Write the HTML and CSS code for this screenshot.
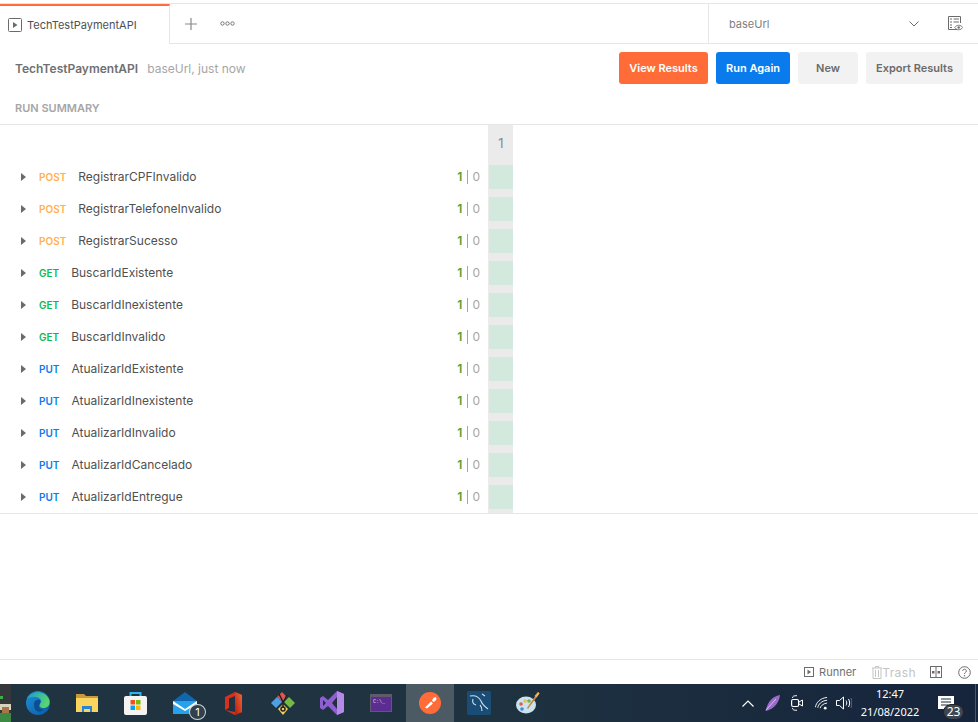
FILE: index.html
```html
<!DOCTYPE html>
<html lang="en">
<head>
<meta charset="utf-8">
<title>TechTestPaymentAPI</title>
<link rel="stylesheet" href="styles.css">
</head>
<body>
<div class="app">
  <div class="tabbar">
    <div class="tab">
      <svg class="tab-icon" width="14" height="14" viewBox="0 0 14 14"><rect x=".5" y=".5" width="13" height="13" rx="1" fill="none" stroke="#6b6b6b"/><path d="M5 4l4.500 3L5 10z" fill="#6b6b6b"/></svg>
      <span class="tab-title">TechTestPaymentAPI</span>
    </div>
    <div class="tab-actions">
      <svg width="12" height="12" viewBox="0 0 12 12"><path d="M6 0v12M0 6h12" stroke="#8a8a8a" stroke-width="1.200"/></svg>
      <svg class="dots" width="15" height="5" viewBox="0 0 15 5"><g fill="none" stroke="#777"><circle cx="2.500" cy="2.500" r="1.700"/><circle cx="7.500" cy="2.500" r="1.700"/><circle cx="12.500" cy="2.500" r="1.700"/></g></svg>
    </div>
    <div class="env">
      <span class="env-name">baseUrl</span>
      <svg width="10" height="6" viewBox="0 0 10 6"><path d="M.5.500L5 5l4.500-4.500" fill="none" stroke="#6b6b6b"/></svg>
    </div>
    <div class="env-eye">
      <svg width="15" height="15" viewBox="0 0 15 15"><path d="M9.500 13.500H.5V.5h12v6.500" fill="none" stroke="#6b6b6b"/><path d="M2 3h2M5.500 3h5.500M2 6h2M5.500 6h5.500M2 9h2M2 11.500h2" stroke="#6b6b6b"/><path d="M6.700 11.500c2-3 6-3 8 0-2 3-6 3-8 0z" fill="#fff" stroke="#6b6b6b" stroke-width=".9"/><circle cx="10.700" cy="11.500" r="1.200" fill="#6b6b6b"/></svg>
    </div>
  </div>

  <div class="run-head">
    <div class="run-title"><strong>TechTestPaymentAPI</strong><span>baseUrl, just now</span></div>
    <div class="run-buttons">
      <button class="btn btn-orange">View Results</button>
      <button class="btn btn-blue">Run Again</button>
      <button class="btn btn-new">New</button>
      <button class="btn btn-export">Export Results</button>
    </div>
  </div>

  <div class="summary-label">RUN SUMMARY</div>

  <div class="summary">
    <div class="grid-head"><span class="iter">1</span></div>
    <div class="row"><div class="info"><i class="caret"></i><b class="m post">POST</b><span class="name">RegistrarCPFInvalido</span><span class="score"><em>1</em><u></u><span>0</span></span></div><div class="cell"><div class="pass"></div></div></div>
    <div class="row"><div class="info"><i class="caret"></i><b class="m post">POST</b><span class="name">RegistrarTelefoneInvalido</span><span class="score"><em>1</em><u></u><span>0</span></span></div><div class="cell"><div class="pass"></div></div></div>
    <div class="row"><div class="info"><i class="caret"></i><b class="m post">POST</b><span class="name">RegistrarSucesso</span><span class="score"><em>1</em><u></u><span>0</span></span></div><div class="cell"><div class="pass"></div></div></div>
    <div class="row"><div class="info"><i class="caret"></i><b class="m get">GET</b><span class="name">BuscarIdExistente</span><span class="score"><em>1</em><u></u><span>0</span></span></div><div class="cell"><div class="pass"></div></div></div>
    <div class="row"><div class="info"><i class="caret"></i><b class="m get">GET</b><span class="name">BuscarIdInexistente</span><span class="score"><em>1</em><u></u><span>0</span></span></div><div class="cell"><div class="pass"></div></div></div>
    <div class="row"><div class="info"><i class="caret"></i><b class="m get">GET</b><span class="name">BuscarIdInvalido</span><span class="score"><em>1</em><u></u><span>0</span></span></div><div class="cell"><div class="pass"></div></div></div>
    <div class="row"><div class="info"><i class="caret"></i><b class="m put">PUT</b><span class="name">AtualizarIdExistente</span><span class="score"><em>1</em><u></u><span>0</span></span></div><div class="cell"><div class="pass"></div></div></div>
    <div class="row"><div class="info"><i class="caret"></i><b class="m put">PUT</b><span class="name">AtualizarIdInexistente</span><span class="score"><em>1</em><u></u><span>0</span></span></div><div class="cell"><div class="pass"></div></div></div>
    <div class="row"><div class="info"><i class="caret"></i><b class="m put">PUT</b><span class="name">AtualizarIdInvalido</span><span class="score"><em>1</em><u></u><span>0</span></span></div><div class="cell"><div class="pass"></div></div></div>
    <div class="row"><div class="info"><i class="caret"></i><b class="m put">PUT</b><span class="name">AtualizarIdCancelado</span><span class="score"><em>1</em><u></u><span>0</span></span></div><div class="cell"><div class="pass"></div></div></div>
    <div class="row row-last"><div class="info"><i class="caret"></i><b class="m put">PUT</b><span class="name">AtualizarIdEntregue</span><span class="score"><em>1</em><u></u><span>0</span></span></div><div class="cell"><div class="pass"></div></div></div>
  </div>

  <div class="spacer"></div>

  <div class="statusbar">
    <span class="st st-run"><svg width="10" height="10" viewBox="0 0 10 10"><rect x=".5" y=".5" width="9" height="9" fill="none" stroke="#6b6b6b"/><path d="M3.500 2.500l3.500 2.500-3.500 2.500z" fill="#6b6b6b"/></svg>Runner</span>
    <span class="st st-trash"><svg width="10" height="13" viewBox="0 0 10 13"><path d="M0 2h10M3.500 2V.5h3V2M1 2v10.500h8V2M3.500 4v7M6.500 4v7" fill="none" stroke="#c4c4c4"/></svg>Trash</span>
    <svg class="st-layout" width="12" height="12" viewBox="0 0 12 12"><rect x=".5" y=".5" width="11" height="11" fill="none" stroke="#6b6b6b"/><path d="M6 .5v11" stroke="#6b6b6b"/><rect x="2" y="5" width="2.500" height="2.500" fill="#6b6b6b"/><rect x="7.500" y="5" width="2.500" height="2.500" fill="#6b6b6b"/></svg>
    <svg class="st-help" width="13" height="13" viewBox="0 0 13 13"><circle cx="6.500" cy="6.500" r="5.800" fill="none" stroke="#6b6b6b"/><path d="M4.700 5c0-2.400 3.700-2.400 3.700 0 0 1.400-1.900 1.300-1.900 2.900" fill="none" stroke="#6b6b6b"/><circle cx="6.500" cy="9.700" r=".7" fill="#6b6b6b"/></svg>
  </div>

  <div class="taskbar">
    <svg class="thumb" width="11" height="38" viewBox="0 0 11 38"><rect width="11" height="38" fill="#34383a"/><rect x="0" y="12" width="3" height="3" fill="#3fae49"/><rect x="0" y="20" width="11" height="6" fill="#d8d2c0"/><rect x="2" y="23" width="7" height="6" fill="#a9744a"/><rect x="0" y="29" width="11" height="9" fill="#3d8a45"/></svg>
    <div class="apps">
      <div class="app-tile"><svg width="24" height="24" viewBox="0 0 24 24"><defs><linearGradient id="eg" x1="0" y1="0" x2="1" y2="1"><stop offset="0" stop-color="#1e90d8"/><stop offset="1" stop-color="#0c59a4"/></linearGradient><linearGradient id="eh" x1="0" y1="0" x2="1" y2="0.400"><stop offset="0" stop-color="#1a9ad6"/><stop offset="1" stop-color="#58d66e"/></linearGradient></defs><circle cx="12" cy="12" r="12" fill="url(#eg)"/><path d="M1 8C4 0 18-2 23 8c2 5-1 9-5 9-4 0-5-2-4-4 1-2 2-3 0-5-3-3-9-3-13 0z" fill="url(#eh)"/><path d="M8 13c0-3 3-5 6-4 1 2 0 3-1 5s1 5 5 4c-4 5-10 3-10-5z" fill="#0b4e92"/></svg></div>
      <div class="app-tile"><svg width="22" height="20" viewBox="0 0 22 20"><path d="M0 1h8l2 2h12v15H0z" fill="#c99a3c"/><path d="M0 5h22v14H0z" fill="#fbd35f"/><path d="M6 13h10v6h-2v-3H8v3H6z" fill="#2a84d0"/></svg></div>
      <div class="app-tile"><svg width="23" height="24" viewBox="0 0 23 24"><path d="M6.500 6V2h10v4" fill="none" stroke="#2fb3e8" stroke-width="2"/><rect y="5" width="23" height="19" rx="2" fill="#f4f4f4"/><rect x="6.500" y="9" width="4.500" height="4.500" fill="#f25022"/><rect x="12" y="9" width="4.500" height="4.500" fill="#7fba00"/><rect x="6.500" y="14.500" width="4.500" height="4.500" fill="#00a4ef"/><rect x="12" y="14.500" width="4.500" height="4.500" fill="#ffb900"/></svg></div>
      <div class="app-tile"><svg width="24" height="23" viewBox="0 0 24 23"><path d="M12 0L0 9v13h24V9z" fill="#1266ad"/><path d="M0 9h24v13H0z" fill="#27a2ea"/><path d="M0 9l12 8 12-8v3l-12 7L0 12z" fill="#fff"/></svg><span class="mail-badge">1</span></div>
      <div class="app-tile"><svg width="17" height="23" viewBox="0 0 17 23"><defs><linearGradient id="og" x1="0" y1="1" x2="1" y2="0"><stop offset="0" stop-color="#b8190f"/><stop offset="1" stop-color="#f0693a"/></linearGradient></defs><path d="M0 5L10 0l7 3v17l-7 3L0 18l10 2V4L4 6.500V16l-4 2z" fill="#d8301c"/><path d="M10 0l7 3v17l-7 3z" fill="url(#og)"/></svg></div>
      <div class="app-tile"><svg width="24" height="24" viewBox="0 0 24 24"><path d="M6 6l5-5 5 5-5 5z" fill="#e0554f"/><path d="M0 12l6-6 5 5-6 6z" fill="#4f9ee8"/><path d="M13 11l5-5 6 6-5 5z" fill="#74b943"/><path d="M7 18l5-5 5 5-5 6z" fill="#f3d05a"/><path d="M8 3l4 8v6M16 4l-4 8" fill="none" stroke="#222" stroke-width="1.500"/><circle cx="12" cy="18" r="2" fill="none" stroke="#222" stroke-width="1.500"/></svg></div>
      <div class="app-tile"><svg width="24" height="24" viewBox="0 0 24 24"><path d="M17 0l7 3v18l-7 3-9-9-5 4-3-2V7l3-2 5 4z" fill="#8e5fd0"/><path d="M17 6l-5 6 5 6zM3 9v6l3-3z" fill="#22303c"/><path d="M17 0l7 3v18l-7 3z" fill="#b48ae6"/></svg></div>
      <div class="app-tile"><svg width="22" height="18" viewBox="0 0 22 18"><rect width="22" height="18" fill="#5f5a6c"/><rect x="1" y="3" width="20" height="14" fill="#5c2d91"/><text x="3" y="8.500" class="cmd-text">C:\_</text></svg></div>
      <div class="app-tile active"><svg width="22" height="22" viewBox="0 0 22 22"><circle cx="11" cy="11" r="11" fill="#ff6c37"/><path d="M6 15.500l6-6 2 2-6 5zM13 8.500c1-3 3-4 4-3s.5 3-2.500 4.500z" fill="#fff"/></svg></div>
      <div class="app-tile"><svg width="24" height="24" viewBox="0 0 24 24"><rect width="24" height="24" rx="2" fill="#1a4d76"/><path d="M3 5c5-1 9 1 11 5 1 3 3 5 7 8M6 8c-1 3 0 5 3 6M15 3l3 2M13 14c2 2 2 4 2 6" fill="none" stroke="#cfe0ec" stroke-width="1.100"/></svg></div>
      <div class="app-tile"><svg width="24" height="24" viewBox="0 0 24 24"><ellipse cx="10" cy="14" rx="10" ry="8.500" fill="#c9e3f0"/><circle cx="5" cy="13" r="1.800" fill="#e25b4b"/><circle cx="9" cy="10" r="1.800" fill="#f0c040"/><circle cx="13" cy="10" r="1.800" fill="#6fb54a"/><circle cx="6" cy="18" r="1.800" fill="#4c86d0"/><path d="M22 1l1.500 1.500-9 12L12 18l-1-1 2-3z" fill="#c98a3c"/><path d="M22 1l1.500 1.500-3 4-2-1.500z" fill="#e8b060"/></svg></div>
    </div>
    <div class="tray">
      <svg width="12" height="7" viewBox="0 0 12 7"><path d="M.5 6.500L6 1l5.500 5.500" fill="none" stroke="#fff" stroke-width="1.200"/></svg>
      <svg width="15" height="16" viewBox="0 0 15 16"><path d="M15 0C9 1 3 5 .5 16 6 15 14 10 15 0z" fill="#9a6bc8"/><path d="M1 15L11 4" stroke="#d8c0ee"/></svg>
      <svg width="12" height="16" viewBox="0 0 12 16"><path d="M1.500 3C1.500 1 3 .7 6 .7M1.500 13c0 2 1.500 2.300 4.500 2.300" fill="none" stroke="#eee"/><rect x=".6" y="4.500" width="7" height="7" rx="1.500" fill="none" stroke="#fff" stroke-width="1.200"/><path d="M8 7l3.500-2v6L8 9" fill="none" stroke="#fff"/></svg>
      <svg class="tray-wifi" width="13" height="13" viewBox="0 0 14 14"><g fill="none" stroke="#fff"><path d="M.5 11C1 6 6 1 13 .5"/><path d="M3 11.500C3.500 8 7 4 13 3.500"/><path d="M5.500 12c.5-2 3-5 7.500-5.500"/></g><circle cx="11" cy="12" r="1.500" fill="#fff"/></svg>
      <svg class="tray-sound" width="16" height="14" viewBox="0 0 16 14"><path d="M.5 4.500h3L7.500 1v12l-4-3.500h-3z" fill="none" stroke="#fff"/><path d="M10 4.500c1 1.500 1 3.500 0 5M12.500 3c1.500 2.500 1.500 5.500 0 8" fill="none" stroke="#fff"/><path d="M15 2c1 3 1 7 0 10" fill="none" stroke="#667"/></svg>
    </div>
    <div class="clock"><span>12:47</span><span>21/08/2022</span></div>
    <div class="notif">
      <svg width="16" height="13" viewBox="0 0 16 13"><path d="M0 0h16v13H0z" fill="#fff"/><path d="M3 3h10M3 6h10M3 9h7" stroke="#1a2a3c"/></svg>
      <span class="notif-badge">23</span>
    </div>
    <div class="peek"></div>
  </div>
</div>
</body>
</html>
```
FILE: styles.css
```css
* { box-sizing: border-box; }
html, body { margin: 0; height: 100%; }
body { font-family: Inter, "Noto Sans", sans-serif; font-size: 12px; color: #505050; background: #fff; overflow: hidden; }
.app { display: flex; flex-direction: column; height: 722px; width: 978px; padding-top: 3px; }

.tabbar { display: flex; height: 41px; border-top: 1px solid #e6e6e6; border-bottom: 1px solid #e6e6e6; flex: none; }
.tab { width: 170px; height: 40px; border-top: 2px solid #ff6c37; border-right: 1px solid #e6e6e6; background: #fff; display: flex; align-items: center; gap: 5px; padding: 0 0 1px 8px; }
.tab-icon { flex: none; }
.tab-title { font-size: 11px; color: #505050; }
.tab-actions { display: flex; align-items: center; gap: 23px; padding-left: 15px; width: 539px; border-right: 1px solid #e6e6e6; }
.dots { margin-bottom: 1px; }
.env { width: 210px; display: flex; align-items: center; justify-content: space-between; padding-left: 20px; }
.env-name { font-size: 11px; color: #808080; }
.env-eye { flex: 1; display: flex; align-items: center; padding-left: 29px; }

.run-head { flex: none; height: 40px; padding: 8px 15px 0; display: flex; justify-content: space-between; align-items: center; }
.run-title { display: flex; gap: 9px; font-size: 12px; align-items: baseline; }
.run-title strong { font-weight: 600; color: #707070; }
.run-title span { color: #a6a6a6; }
.run-buttons { display: flex; gap: 8px; }
.btn { border: 0; height: 32px; border-radius: 3px; font: 600 11px Inter, "Noto Sans", sans-serif; padding: 0; }
.btn-orange { width: 89px; background: #ff6c37; color: #fff; }
.btn-blue { width: 74px; background: #097bed; color: #fff; }
.btn-new { width: 60px; background: #f2f2f2; color: #6b6b6b; }
.btn-export { width: 97px; background: #f2f2f2; color: #6b6b6b; }

.summary-label { flex: none; height: 41px; padding: 18px 15px 0; font-size: 11px; font-weight: 600; color: #a6a6a6; border-bottom: 1px solid #e6e6e6; line-height: 13px; }

.summary { flex: none; border-bottom: 1px solid #e6e6e6; width: 100%; }
.grid-head { width: 25px; height: 40px; margin-left: 488px; padding: 0 0 4px 1px; background: #ebebeb; display: flex; align-items: center; justify-content: center; }
.iter { color: #7f8c99; font-size: 13px; }
.row { display: flex; height: 32px; }
.row-last { height: 28px; }
.info { width: 488px; height: 24px; display: flex; align-items: center; padding: 0 8px 0 21px; }
.caret { width: 0; height: 0; border-left: 5px solid #6b6b6b; border-top: 4px solid transparent; border-bottom: 4px solid transparent; margin-right: 13px; flex: none; }
.m { font-size: 10px; font-weight: 600; margin-right: 12px; }
.m.post { color: #ffb150; }
.m.get { color: #0cbb52; }
.m.put { color: #097bed; }
.name { flex: 1; color: #505050; font-size: 12px; margin-bottom: 2px; }
.score { display: flex; align-items: center; color: #a6a6a6; font-size: 12px; margin-bottom: 1px; }
.score em { font-style: normal; color: #5d9c2e; font-weight: 600; margin-right: 5px; }
.score u { width: 1px; height: 14px; background: #a6a6a6; margin-right: 4px; }
.cell { width: 25px; background: #ebebeb; padding-left: 1px; }
.pass { height: 24px; background: #d4e9dd; }

.spacer { flex: 1; }

.statusbar { flex: none; height: 25px; border-top: 1px solid #e6e6e6; display: flex; align-items: center; justify-content: flex-end; padding-right: 7px; font-size: 11px; }
.st { display: flex; align-items: center; gap: 5px; color: #707070; }
.st-trash { color: #c4c4c4; gap: 0; margin-left: 16px; font-size: 12px; letter-spacing: .4px; }
.st-layout { margin-left: 14px; }
.st-help { margin-left: 16px; }

.taskbar { flex: none; height: 38px; background: linear-gradient(90deg, #203440 0%, #1e3240 50%, #16243c 100%); display: flex; align-items: center; color: #fff; }
.thumb { flex: none; display: block; }
.apps { display: flex; flex: none; margin-left: 2px; }
.app-tile { width: 49px; height: 38px; display: flex; align-items: center; justify-content: center; position: relative; flex: none; }
.app-tile.active { background: #4c5a64; width: 48px; margin-left: 1px; }
.mail-badge { position: absolute; right: 3px; bottom: 2px; width: 17px; height: 16px; border-radius: 50%; background: #30404c; border: 1px solid #cfd4d8; font-size: 11px; line-height: 14px; text-align: center; color: #fff; }
.cmd-text { font: 5px "Liberation Mono", monospace; fill: #ddd; }
.tray { display: flex; align-items: center; gap: 11px; margin-left: auto; }
.tray-wifi { margin-left: 1px; }
.tray-sound { margin-left: -3px; }
.clock { width: 72px; margin-left: 2px; display: flex; flex-direction: column; align-items: center; font: 11px/18px "Noto Sans", sans-serif; color: #fff; }
.notif { width: 49px; height: 38px; position: relative; display: flex; padding: 12px 0 0 12px; }
.notif-badge { position: absolute; left: 17px; bottom: 2px; width: 21px; height: 16px; border-radius: 8px; background: #3c4654; border: 1px solid #222; font: 12px/14px "Noto Sans", sans-serif; text-align: center; color: #fff; }
.peek { width: 3px; height: 38px; border-left: 1px solid #4a5668; }
```
